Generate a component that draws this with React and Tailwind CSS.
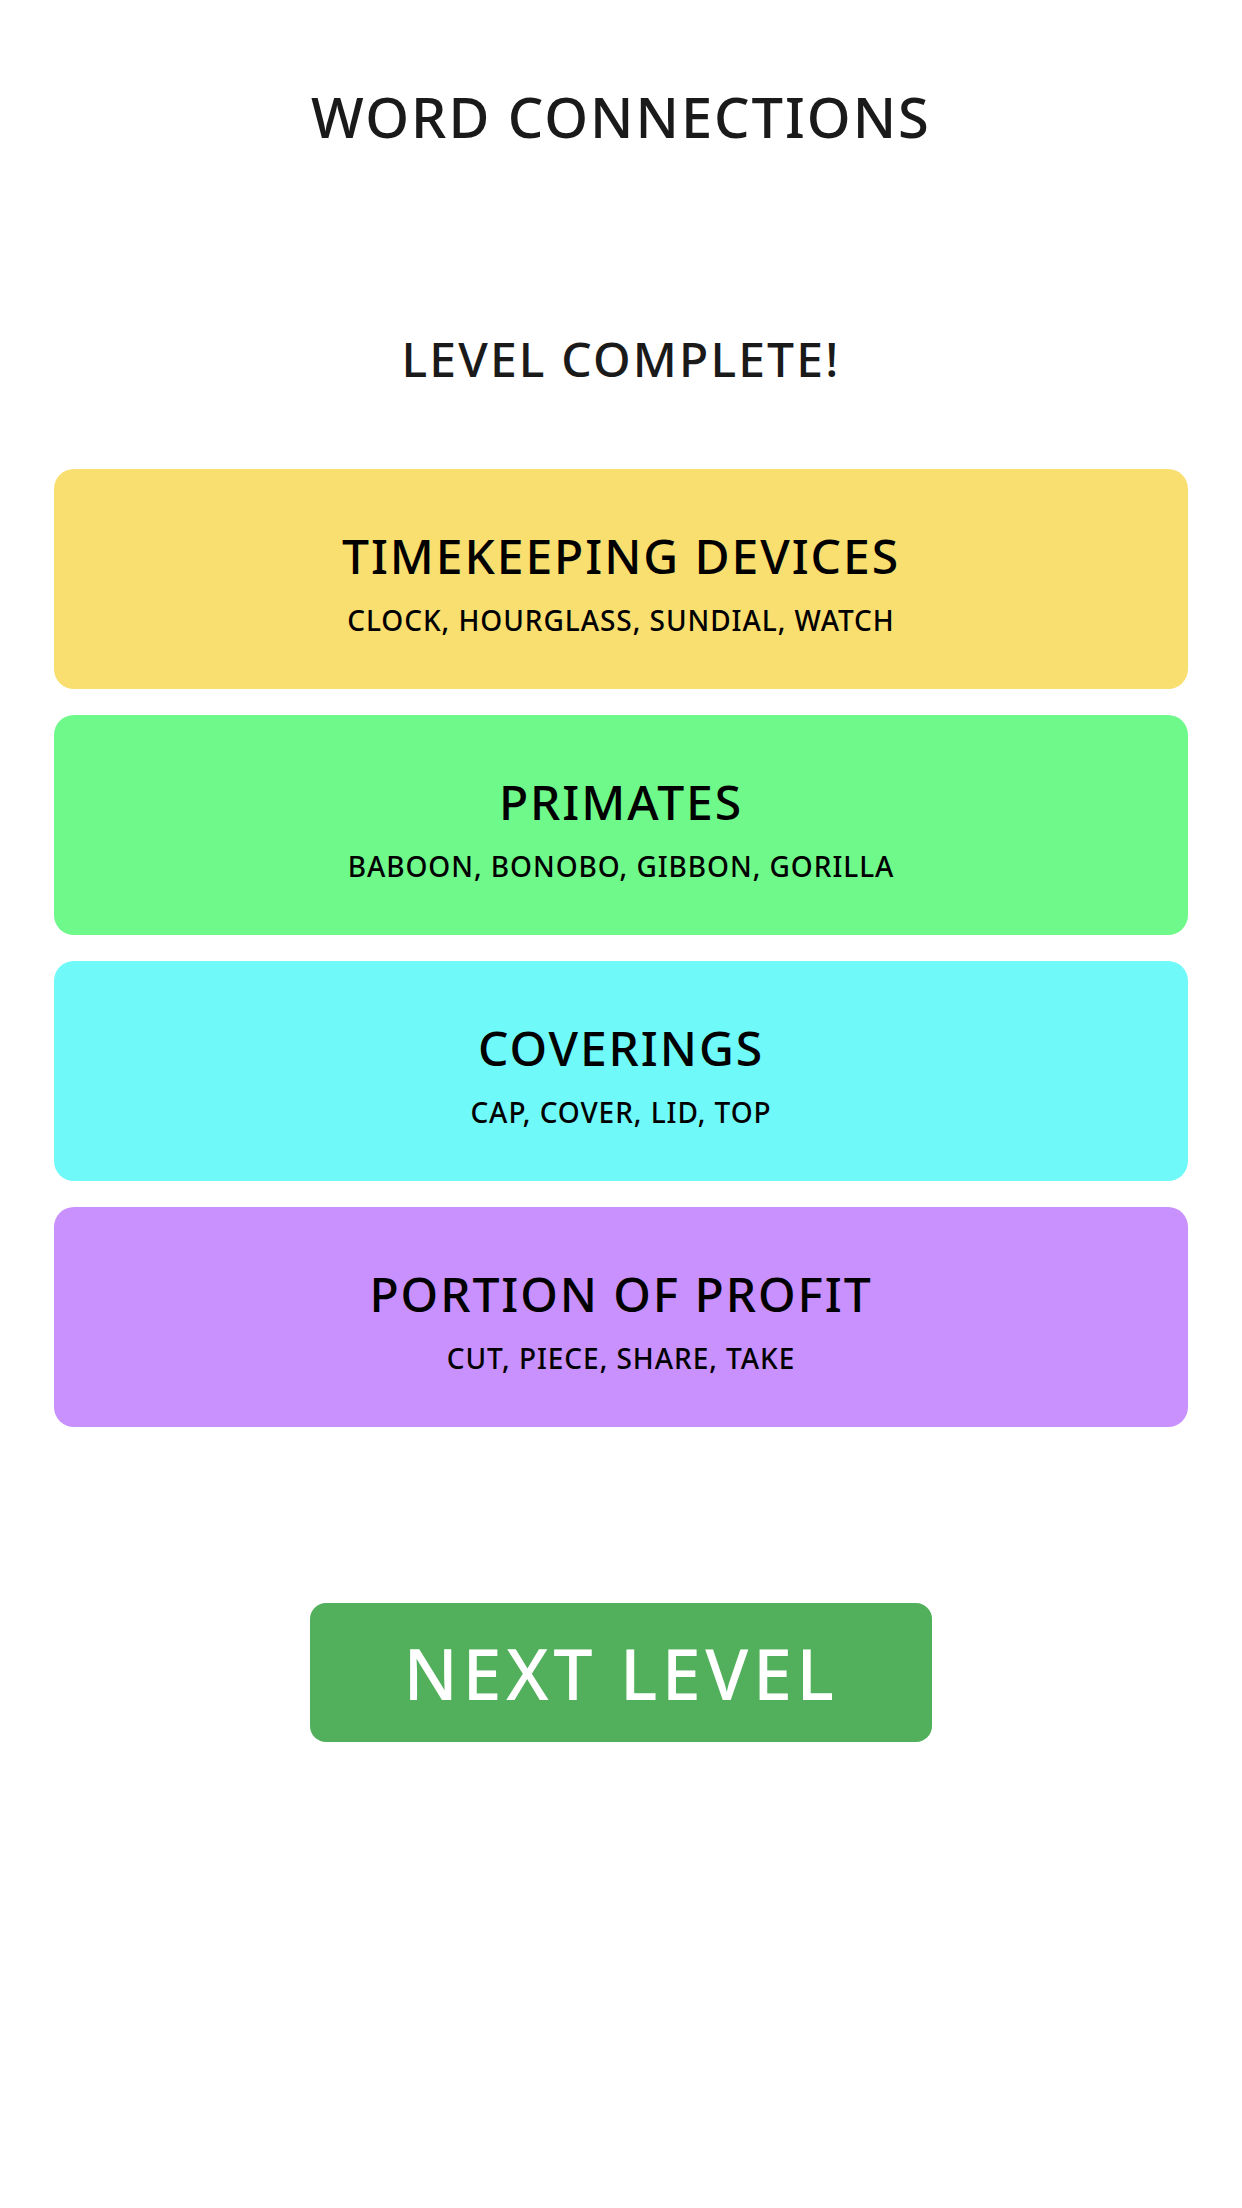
const groups = [
  { title: 'TIMEKEEPING DEVICES', words: 'CLOCK, HOURGLASS, SUNDIAL, WATCH', color: 'bg-[#f9de70]' },
  { title: 'PRIMATES', words: 'BABOON, BONOBO, GIBBON, GORILLA', color: 'bg-[#6ff98a]' },
  { title: 'COVERINGS', words: 'CAP, COVER, LID, TOP', color: 'bg-[#6ff9f9]' },
  { title: 'PORTION OF PROFIT', words: 'CUT, PIECE, SHARE, TAKE', color: 'bg-[#c891fd]' },
]

export default function App() {
  return (
    <div className="min-h-[2208px] w-full bg-white font-['Noto_Sans',sans-serif] flex flex-col items-center">
      <h1 className="pt-[88px] text-[56px] leading-none font-medium text-[#1a1a1a] tracking-[0.035em]">WORD CONNECTIONS</h1>
      <h2 className="mt-[191px] text-[48px] leading-none font-medium text-[#1a1a1a] tracking-[0.045em]">LEVEL COMPLETE!</h2>

      <div className="mt-[86px] w-full px-[54px] flex flex-col gap-[26px]">
        {groups.map((g) => (
          <div key={g.title} className={`${g.color} h-[220px] rounded-[20px] flex flex-col items-center justify-center gap-[26px] pt-2 text-black`}>
            <div className="text-[48px] leading-none font-medium tracking-[0.04em]">{g.title}</div>
            <div className="text-[28px] leading-none font-medium tracking-[0.034em]">{g.words}</div>
          </div>
        ))}
      </div>

      <button className="mt-[176px] w-[622px] h-[139px] rounded-[16px] bg-[#52b05c] text-white text-[70px] leading-none font-medium tracking-[0.065em]">
        NEXT LEVEL
      </button>
    </div>
  )
}
